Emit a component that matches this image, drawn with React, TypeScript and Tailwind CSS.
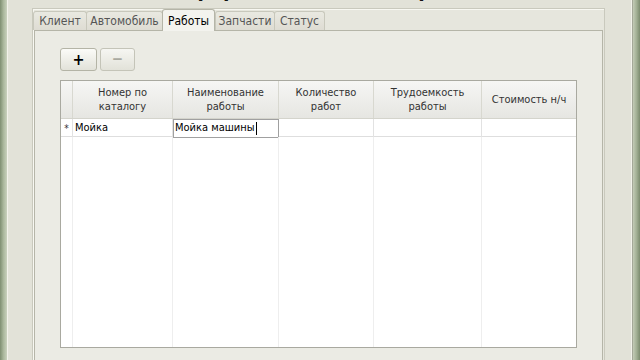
import React from "react";

const font = { fontFamily: "'DejaVu Sans Condensed', 'DejaVu Sans', 'Liberation Sans', sans-serif" };

const tabs = ["Клиент", "Автомобиль", "Работы", "Запчасти", "Статус"];
const tabW = ["w-[54px]", "w-[77px]", "w-[53px]", "w-[60px]", "w-[51px]"];

const headers = [
  ["Номер по", "каталогу"],
  ["Наименование", "работы"],
  ["Количество", "работ"],
  ["Трудоемкость", "работы"],
  ["Стоимость н/ч"],
];

export default function App() {
  return (
    <div className="w-[640px] h-[360px] overflow-hidden flex bg-[#e2e2d8]" style={font}>
      {/* left window border */}
      <div className="w-[8px] h-full bg-gradient-to-r from-[#7f8f72] via-[#aab79c] to-[#c9d1bd] border-r border-[#f2f2ea]" />
      <div className="flex-1 flex flex-col">
        {/* title, cut off */}
        <div className="h-[8px] overflow-hidden flex items-end justify-center pl-[8px]">
          <div className="text-[21px] font-bold leading-[24px] mb-[6px] text-[#111]">Оформление заказ-наряда</div>
        </div>
        <div className="flex flex-1">
          <div className="w-[24px]" />
          {/* tab control frame */}
          <div className="w-[573px] flex flex-col border-t border-l border-r border-[#c9c9bd] bg-[#e6e6dd] shadow-[inset_1px_1px_0_#f8f8f2]">
            <div className="h-[21px] flex items-end">
              {tabs.map((t, i) =>
                i === 2 ? (
                  <div
                    key={t}
                    className={`${tabW[i]} h-[22px] -mb-[1px] relative z-10 flex items-center justify-center border border-b-0 border-[#b5b5a8] rounded-t-[3px] bg-[#f3f3ee] text-[12px] text-black`}
                  >
                    {t}
                  </div>
                ) : (
                  <div
                    key={t}
                    className={`${tabW[i]} h-[19px] flex items-center justify-center border border-b-0 border-[#c8c8bc] rounded-t-[3px] bg-gradient-to-b from-[#e9e9e1] to-[#dedcd3] text-[12px] text-[#555] -mr-[1px]`}
                  >
                    {t}
                  </div>
                )
              )}
            </div>
            {/* content panel */}
            <div className="flex-1 mx-[1px] border-t border-l border-r border-[#b5b5a8] bg-[#ebebe4] pl-[25px] pt-[17px]">
              <div className="flex gap-[3px]">
                <div className="w-[37px] h-[23px] flex items-center justify-center rounded-[3px] border border-[#b4b4a6] bg-gradient-to-b from-[#fbfbf8] to-[#e2e2d9] text-[16px] font-bold text-black leading-none">
                  +
                </div>
                <div className="w-[35px] h-[23px] flex items-center justify-center rounded-[3px] border border-[#c4c4b8] bg-gradient-to-b from-[#f6f6f2] to-[#e2e2d9] text-[15px] font-bold text-[#a9a9a0] leading-none">
                  −
                </div>
              </div>
              {/* table */}
              <div className="mt-[9px] w-[517px] h-[268px] border border-[#a9a9a0] bg-white flex flex-col text-[11px] text-[#222]">
                <div className="grid grid-cols-[12px_100px_106px_95px_108px_94px] h-[38px] bg-gradient-to-b from-[#f6f6f4] to-[#e6e6e2] border-b border-[#d4d4cc]">
                  <div className="border-r border-[#d8d8d0]" />
                  {headers.map((h, i) => (
                    <div
                      key={i}
                      className={`flex flex-col items-center justify-center leading-[14px] text-[#333] ${i < 4 ? "border-r border-[#d8d8d0]" : ""}`}
                    >
                      {h.map((l) => (
                        <span key={l}>{l}</span>
                      ))}
                    </div>
                  ))}
                </div>
                <div className="grid grid-cols-[12px_100px_106px_95px_108px_94px] h-[18px] border-b border-[#dedede]">
                  <div className="border-r border-[#e2e2e2] flex items-center justify-center text-[10px] text-[#333]">*</div>
                  <div className="border-r border-[#e2e2e2] flex items-center pl-[2px] text-black">Мойка</div>
                  <div className="border border-[#a0a0a0] flex items-center pl-[1px] text-black bg-white">
                    Мойка машины<span className="w-[1px] h-[13px] bg-black ml-[1px]" />
                  </div>
                  <div className="border-r border-[#e2e2e2]" />
                  <div className="border-r border-[#e2e2e2]" />
                  <div />
                </div>
                <div className="grid grid-cols-[12px_100px_106px_95px_108px_94px] flex-1">
                  <div className="border-r border-[#eeeeee]" />
                  <div className="border-r border-[#eeeeee]" />
                  <div className="border-r border-[#eeeeee]" />
                  <div className="border-r border-[#eeeeee]" />
                  <div className="border-r border-[#eeeeee]" />
                  <div />
                </div>
              </div>
            </div>
          </div>
          <div className="w-[26px]" />
        </div>
      </div>
      {/* right window border */}
      <div className="w-[2px] h-full bg-[#a4a898] border-l border-[#f2f2ea]" />
      <div className="w-[7px] h-full bg-gradient-to-r from-[#c3cbb6] via-[#a3b095] to-[#7c8c6f]" />
    </div>
  );
}
